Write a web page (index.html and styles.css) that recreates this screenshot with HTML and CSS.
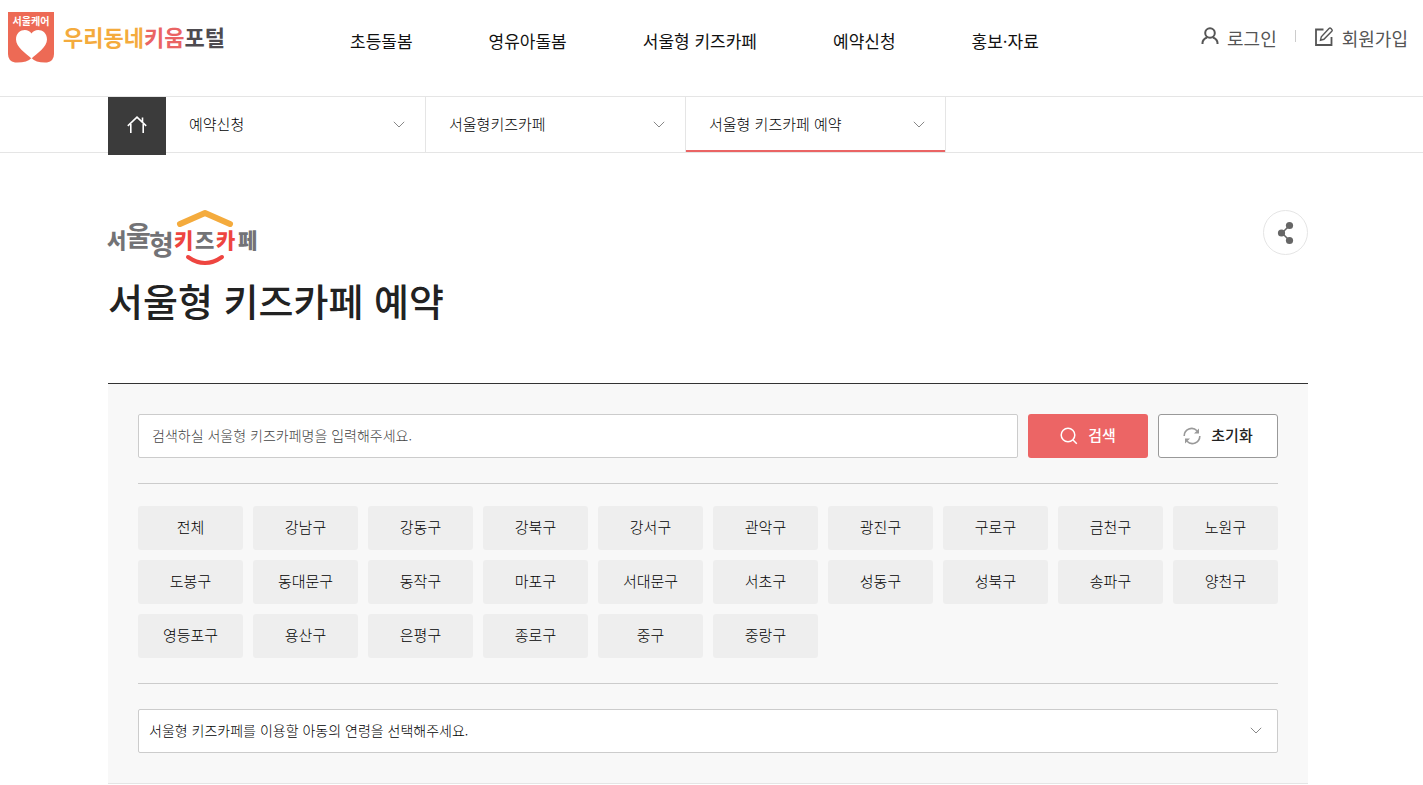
FILE: index.html
```html
<!DOCTYPE html>
<html lang="ko">
<head>
<meta charset="utf-8">
<meta name="viewport" content="width=device-width, initial-scale=1">
<title>서울형 키즈카페 예약 - 우리동네키움포털</title>
<link rel="stylesheet" href="styles.css">
</head>
<body>
<header class="header">
  <a class="brand" href="#">
    <svg class="brand-mark" viewBox="0 0 46 51" role="img" aria-label="서울케어">
      <path fill="#ed6a55" d="M0 0h46v42q0 7-7 8.500Q28 51 23.500 46 19 51 7 50.500 0 49 0 42z"/>
      <path fill="#fff" d="M23.500 46.500C18 41.500 8 35 8 27.500c0-10.500 12-12 15.500-6C27 15.500 39 17 39 27.500c0 7.500-10 14-15.500 19z"/>
      <text class="brand-mark-text" x="23" y="13" text-anchor="middle">서울케어</text>
    </svg>
    <span class="brand-name"><span class="yellow">우리동네</span><span class="coral">키움</span>포털</span>
  </a>
  <nav class="gnb" aria-label="주 메뉴">
    <a href="#">초등돌봄</a>
    <a href="#">영유아돌봄</a>
    <a href="#">서울형 키즈카페</a>
    <a href="#">예약신청</a>
    <a href="#">홍보·자료</a>
  </nav>
  <div class="member">
    <a href="#">
      <svg width="18" height="18" viewBox="0 0 18 18" fill="none" stroke="#555" stroke-width="2"><circle cx="9" cy="6" r="4.800"/><path d="M1.500 17v-1c0-2.500 2-4.500 4.500-5.500M16.500 17v-1c0-2.500-2-4.500-4.500-5.500"/></svg>
      로그인
    </a>
    <span class="divider"></span>
    <a href="#">
      <svg width="20" height="20" viewBox="0 0 20 20" fill="none" stroke="#555" stroke-width="1.800"><path d="M9.500 2.500H2v15.500h15.500v-8"/><path stroke-width="1.400" d="M6.500 13.200l.8-3.400L15 1.600c.6-.6 1.400-.6 2 0l.8.800c.6.600.6 1.300 0 1.900l-7.900 8z"/></svg>
      회원가입
    </a>
  </div>
</header>

<nav class="crumbs" aria-label="현재 위치">
  <a class="home" href="#" aria-label="홈">
    <svg width="20" height="18" viewBox="0 0 20 18" fill="none" stroke="#fff" stroke-width="1.600"><path d="M.8 9.800L10 1.200l9.200 8.600M3.800 8v9M16.200 8v9M15.500 1.500v5"/></svg>
  </a>
  <button type="button" class="crumb"><span>예약신청</span><svg class="chevron" viewBox="0 0 12 7"><path d="M.8.8L6 6 11.200.8"/></svg></button>
  <button type="button" class="crumb"><span>서울형키즈카페</span><svg class="chevron" viewBox="0 0 12 7"><path d="M.8.8L6 6 11.200.8"/></svg></button>
  <button type="button" class="crumb current"><span>서울형 키즈카페 예약</span><svg class="chevron" viewBox="0 0 12 7"><path d="M.8.8L6 6 11.200.8"/></svg></button>
</nav>

<main class="content">
  <div class="heading">
    <div>
      <svg class="cafe-logo" viewBox="0 0 152 56" role="img" aria-label="서울형키즈카페">
        <path d="M72 14L97 3l25 11" fill="none" stroke="#f4ab3d" stroke-width="6" stroke-linecap="round" stroke-linejoin="round"/>
        <path d="M80 47q17 12 34 0" fill="none" stroke="#ee4540" stroke-width="4" stroke-linecap="round"/>
        <g class="cafe-text">
          <text x="-1" y="38">서</text>
          <text class="tall" x="18" y="36">울</text>
          <text class="tall" x="41" y="45">형</text>
          <text class="red" x="66" y="38">키</text>
          <text x="87" y="38">즈</text>
          <text class="red" x="108" y="38">카</text>
          <text x="130" y="38">페</text>
        </g>
      </svg>
      <h1>서울형 키즈카페 예약</h1>
    </div>
    <button type="button" class="share" aria-label="공유">
      <svg width="18" height="24" viewBox="0 0 18 24"><path d="M13 4L5 12l8 8" fill="none" stroke="#666" stroke-width="1.500"/><g fill="#666"><circle cx="12.500" cy="4.500" r="3.600"/><circle cx="4.500" cy="12" r="3.600"/><circle cx="12.500" cy="19.500" r="3.600"/></g></svg>
    </button>
  </div>

  <form class="panel">
    <div class="search">
      <input type="text" aria-label="키즈카페명" placeholder="검색하실 서울형 키즈카페명을 입력해주세요.">
      <button type="submit" class="btn primary">
        <svg width="18" height="18" viewBox="0 0 18 18" fill="none" stroke="#fff" stroke-width="1.500"><circle cx="8" cy="8" r="6.800"/><path d="M12.800 12.800l4 4"/></svg>
        <span>검색</span>
      </button>
      <button type="reset" class="btn outline">
        <svg width="18" height="18" viewBox="0 0 18 18" fill="none" stroke="#999" stroke-width="1.600"><path d="M1.200 9A7.500 7.500 0 0 1 14 3.700M16.800 9A7.500 7.500 0 0 1 4 14.300"/><path fill="#999" stroke="none" d="M16 1.500v5h-5zM2 16.500v-5h5z"/></svg>
        <span>초기화</span>
      </button>
    </div>
    <div class="districts">
      <button type="button">전체</button><button type="button">강남구</button><button type="button">강동구</button><button type="button">강북구</button><button type="button">강서구</button><button type="button">관악구</button><button type="button">광진구</button><button type="button">구로구</button><button type="button">금천구</button><button type="button">노원구</button>
      <button type="button">도봉구</button><button type="button">동대문구</button><button type="button">동작구</button><button type="button">마포구</button><button type="button">서대문구</button><button type="button">서초구</button><button type="button">성동구</button><button type="button">성북구</button><button type="button">송파구</button><button type="button">양천구</button>
      <button type="button">영등포구</button><button type="button">용산구</button><button type="button">은평구</button><button type="button">종로구</button><button type="button">중구</button><button type="button">중랑구</button>
    </div>
    <div class="age">
      <select aria-label="아동 연령">
        <option>서울형 키즈카페를 이용할 아동의 연령을 선택해주세요.</option>
      </select>
      <svg class="chevron" viewBox="0 0 12 7"><path d="M.8.8L6 6 11.200.8"/></svg>
    </div>
  </form>
</main>
</body>
</html>
```
FILE: styles.css
```css
* { box-sizing: border-box; }

body {
  margin: 0;
  background: #fff;
  color: #222;
  font-family: "Noto Sans CJK KR", "Liberation Sans", sans-serif;
  font-size: 15px;
}

a { color: inherit; text-decoration: none; }
button, input, select { font: inherit; color: inherit; }
button { cursor: pointer; }

.header {
  display: flex;
  align-items: flex-start;
  height: 97px;
  padding: 12px 15px 0 8px;
  border-bottom: 1px solid #e5e5e5;
}

.brand { display: flex; gap: 9px; width: 342px; }
.brand-mark { width: 46px; height: 51px; }
.brand-mark-text { fill: #fff; font-size: 10px; font-weight: 700; }
.brand-name { color: #4e4b50; font-size: 22px; font-weight: 700; line-height: 48px; }
.yellow { color: #f4ab3d; }
.coral { color: #ea6464; }

.gnb { display: flex; gap: 76px; color: #111; font-size: 17px; font-weight: 400; line-height: 58px; white-space: nowrap; }

.member { display: flex; align-items: flex-start; gap: 18px; margin-left: auto; color: #555; font-size: 18px; line-height: 52px; white-space: nowrap; }
.member a { display: flex; gap: 8px; }
.member svg { margin-top: 15px; }
.divider { width: 1px; height: 12px; margin-top: 18px; background: #ccc; }

.crumbs { display: flex; height: 56px; padding-left: 108px; border-bottom: 1px solid #e5e5e5; }
.home { display: flex; align-items: center; justify-content: center; width: 58px; height: 58px; padding-bottom: 2px; background: #3b3b3b; }
.crumb {
  display: flex;
  align-items: center;
  justify-content: space-between;
  width: 260px;
  padding: 0 20px 0 23px;
  border: 0;
  border-right: 1px solid #e5e5e5;
  background: none;
  color: #000;
  font-size: 15px;
  font-weight: 300;
}
.crumb span { padding-bottom: 3px; }
.crumb.current { box-shadow: inset 0 -2px #ea6464; }
.chevron { width: 12px; height: 7px; fill: none; stroke: #888; stroke-width: 1; }

.content { padding: 57px 115px 0 108px; }
.heading { display: flex; justify-content: space-between; align-items: flex-start; height: 173px; }
.cafe-logo { display: block; width: 152px; height: 56px; overflow: visible; }
.cafe-text { fill: #737376; font-size: 21px; font-weight: 900; }
.cafe-text .tall { font-size: 27px; font-weight: 700; }
.cafe-text .red { fill: #ee4540; }
h1 { margin: 4px 0 0; font-size: 38px; font-weight: 500; line-height: 60px; }
.share { display: flex; align-items: center; justify-content: center; width: 45px; height: 45px; padding: 0; border: 1px solid #e5e5e5; border-radius: 50%; background: #fff; }

.panel { padding: 30px; border-top: 1px solid #333; border-bottom: 1px solid #e5e5e5; background: #f8f8f8; }
.search { display: flex; gap: 10px; padding-bottom: 25px; border-bottom: 1px solid #ccc; }
.search input {
  flex: 1;
  min-width: 0;
  height: 44px;
  padding: 0 13px 2px;
  border: 1px solid #ccc;
  border-radius: 2px;
  background: #fff;
  font-size: 14px;
  font-weight: 300;
}
.search input::placeholder { color: #444; opacity: 1; }
.btn { display: flex; align-items: center; justify-content: center; gap: 10px; width: 120px; height: 44px; padding: 0; border-radius: 3px; font-weight: 500; }
.btn span { padding-bottom: 3px; }
.primary { border: 0; background: #ec6565; color: #fff; }
.outline { border: 1px solid #999; background: #fff; }

.districts { display: grid; grid-template-columns: repeat(10, 1fr); gap: 10px; padding: 22px 0 25px; border-bottom: 1px solid #ccc; }
.districts button { height: 44px; padding: 0 0 4px; border: 0; border-radius: 3px; background: #eee; color: #000; font-weight: 300; }

.age { position: relative; margin-top: 25px; }
.age select {
  display: block;
  width: 100%;
  height: 44px;
  padding: 0 40px 3px 10px;
  border: 1px solid #ccc;
  border-radius: 2px;
  background: #fff;
  color: #000;
  font-size: 14px;
  font-weight: 300;
  appearance: none;
}
.age .chevron { position: absolute; top: 18px; right: 16px; pointer-events: none; }
```
